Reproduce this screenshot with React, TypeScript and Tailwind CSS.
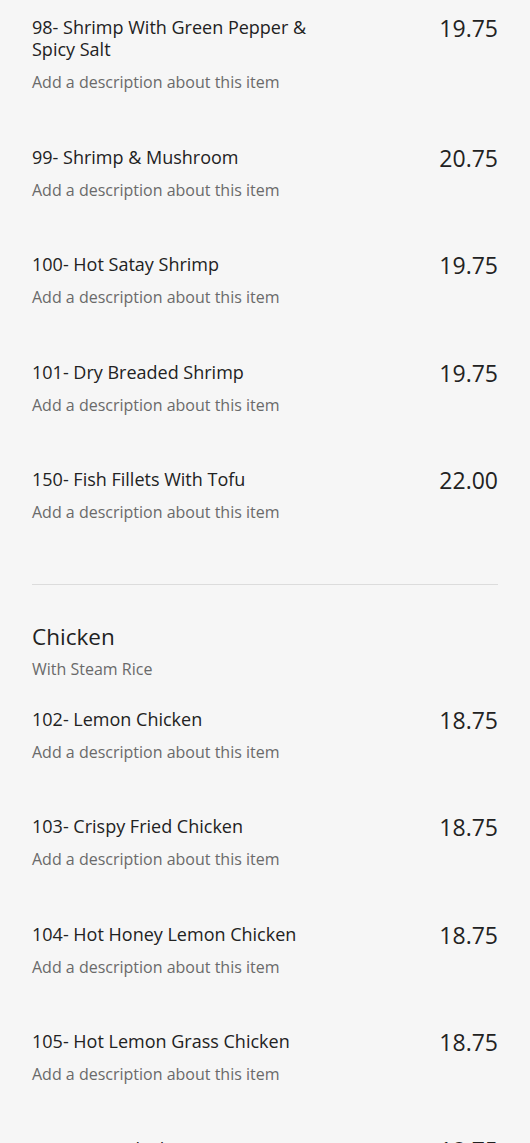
import React from "react";

type Item = { name: string; price: string };

const seafood: Item[] = [
  { name: "98- Shrimp With Green Pepper & Spicy Salt", price: "19.75" },
  { name: "99- Shrimp & Mushroom", price: "20.75" },
  { name: "100- Hot Satay Shrimp", price: "19.75" },
  { name: "101- Dry Breaded Shrimp", price: "19.75" },
  { name: "150- Fish Fillets With Tofu", price: "22.00" },
];

const chicken: Item[] = [
  { name: "102- Lemon Chicken", price: "18.75" },
  { name: "103- Crispy Fried Chicken", price: "18.75" },
  { name: "104- Hot Honey Lemon Chicken", price: "18.75" },
  { name: "105- Hot Lemon Grass Chicken", price: "18.75" },
  { name: "106- Curry Chicken", price: "18.75" },
];

function MenuItem({ item }: { item: Item }) {
  return (
    <div className="flex justify-between pb-[52.5px]">
      <div className="w-[300px]">
        <p className="text-[18px] leading-[22px] text-[#222]">{item.name}</p>
        <p className="mt-[11px] text-[16px] leading-[22px] text-[#6a6a6a]">
          Add a description about this item
        </p>
      </div>
      <span className="text-[23px] leading-[24px] text-[#222]">{item.price}</span>
    </div>
  );
}

export default function App() {
  return (
    <div
      className="min-h-screen bg-[#f6f6f6] px-8 pt-4"
      style={{ fontFamily: '"Open Sans", sans-serif' }}
    >
      {seafood.map((it) => (
        <MenuItem key={it.name} item={it} />
      ))}

      <div className="mt-2 border-t border-[#dcdcdc]" />

      <div className="mt-[37px]">
        <h2 className="text-[22.5px] leading-[30px] text-[#222]">Chicken</h2>
        <p className="mt-[6px] text-[16px] leading-[22px] text-[#6a6a6a]">With Steam Rice</p>
      </div>

      <div className="mt-[28px]">
        {chicken.map((it) => (
          <MenuItem key={it.name} item={it} />
        ))}
      </div>
    </div>
  );
}
